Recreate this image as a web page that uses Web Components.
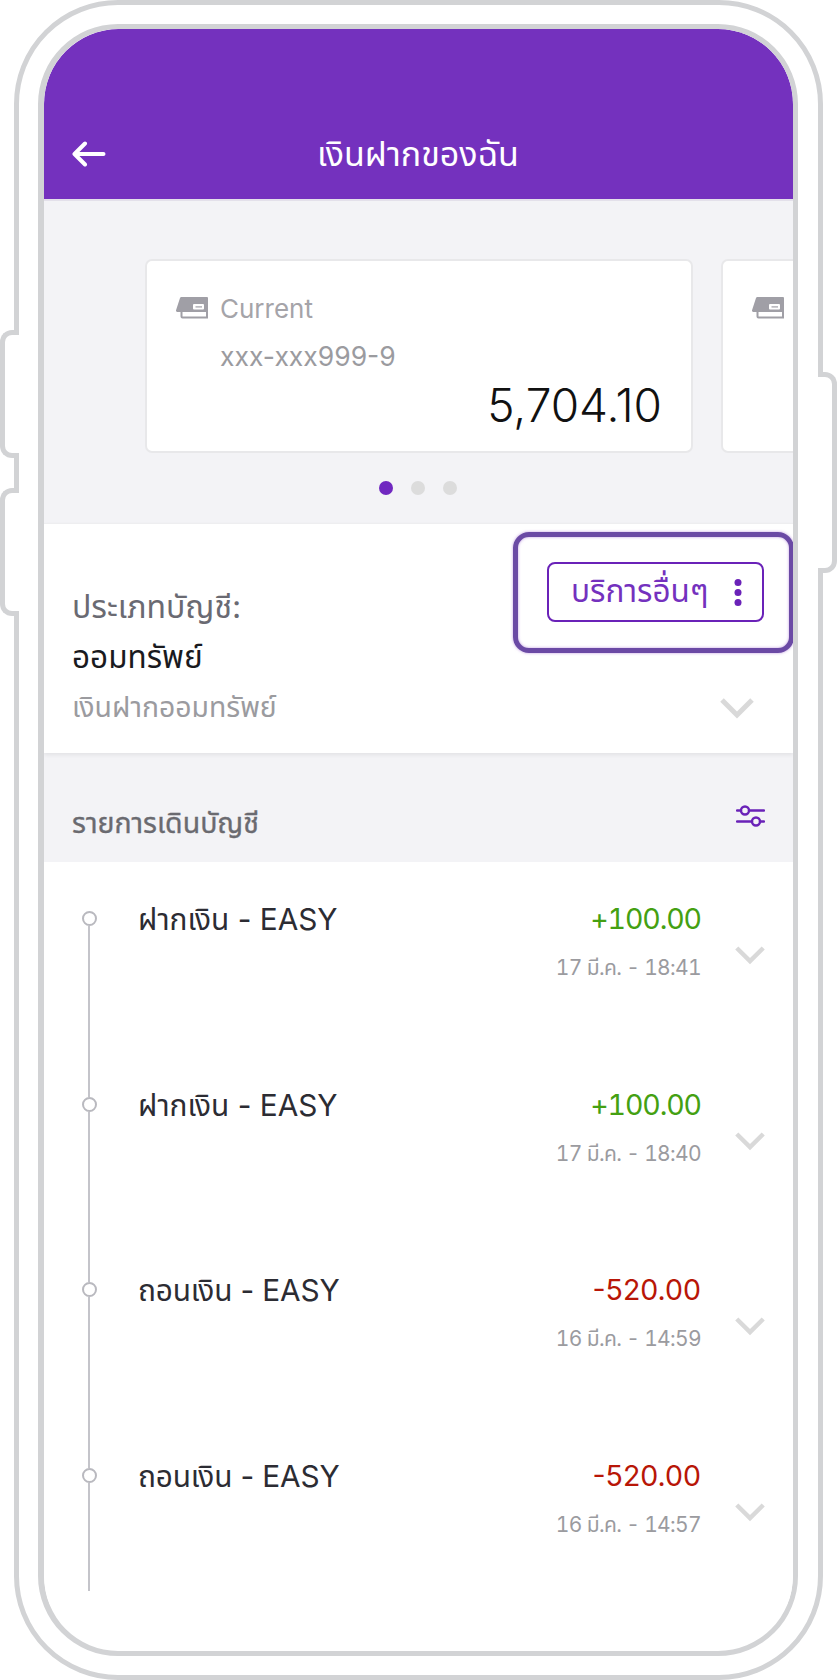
<!DOCTYPE html>
<html lang="th">
<head>
<meta charset="utf-8">
<title>เงินฝากของฉัน</title>
<style>
  html, body { margin: 0; background: #fff; }
  body { font-family: Inter, "Noto Sans Thai", "Noto Sans", sans-serif; }
</style>
</head>
<body>
<phone-frame>
  <app-header>เงินฝากของฉัน</app-header>
  <account-carousel>
    <account-card type="Current" number="xxx-xxx999-9" balance="5,704.10"></account-card>
    <account-card></account-card>
  </account-carousel>
  <account-info></account-info>
  <section-title>รายการเดินบัญชี</section-title>
  <tx-row title="ฝากเงิน - EASY" amount="+100.00" date="17 มี.ค. - 18:41" kind="in" first></tx-row>
  <tx-row title="ฝากเงิน - EASY" amount="+100.00" date="17 มี.ค. - 18:40" kind="in"></tx-row>
  <tx-row title="ถอนเงิน - EASY" amount="-520.00" date="16 มี.ค. - 14:59" kind="out"></tx-row>
  <tx-row title="ถอนเงิน - EASY" amount="-520.00" date="16 มี.ค. - 14:57" kind="out" last></tx-row>
</phone-frame>

<script>
const chevron = `<svg width="34" height="22" viewBox="0 0 34 22"><path d="M2 3l15 15L32 3" fill="none" stroke="#d9d9d9" stroke-width="5"/></svg>`;

//marco del telefono
const frameTpl = document.createElement("template");
frameTpl.innerHTML = `
<style>
  :host { display: block; position: relative; width: 837px; height: 1680px; overflow: hidden; }
  .outer {
    box-sizing: border-box; height: 1680px; margin: 0 14px;
    border: 5px solid #d2d3d5; border-radius: 104px;
    padding: 19px 20px 19px 19px; background: #fff;
  }
  .screen {
    box-sizing: border-box; height: 100%;
    border: 5px solid #d2d3d5; border-left-width: 6px; border-radius: 80px;
    overflow: hidden; background: #fff;
  }
  .inner { height: 100%; border-radius: 75px; overflow: hidden; }
  .bump {
    position: absolute; box-sizing: border-box; background: #fff;
    border: 5px solid #d2d3d5;
  }
  .left { left: 0; width: 19px; border-right: 0; border-radius: 12px 0 0 12px; }
  .right { left: 818px; width: 19px; top: 372px; height: 201px; border-left: 0; border-radius: 0 12px 12px 0; }
</style>
<div class="outer"><div class="screen"><div class="inner"><slot></slot></div></div></div>
<div class="bump left" style="top:330px;height:128px"></div>
<div class="bump left" style="top:488px;height:128px"></div>
<div class="bump right"></div>
`;
class PhoneFrame extends HTMLElement {
  constructor() {
    super();
    this.attachShadow({ mode: "open" });
    this.shadowRoot.append(frameTpl.content.cloneNode(true));
  }
}
customElements.define("phone-frame", PhoneFrame);

//cabecera
const headerTpl = document.createElement("template");
headerTpl.innerHTML = `
<style>
  :host {
    display: flex; box-sizing: border-box; height: 172px; align-items: flex-end;
    background: #7431be; border-bottom: 2px solid #e3e0ea; color: #fff; position: relative;
  }
  .bar { display: flex; align-items: center; justify-content: center; width: 100%; height: 76px; padding-bottom: 14px; box-sizing: border-box; position: relative; }
  .title { font-size: 34px; line-height: 40px; margin-right: 1px; }
  svg { position: absolute; left: 28px; top: 18px; }
</style>
<div class="bar">
  <svg width="34" height="26" viewBox="0 0 34 26"><path d="M31.500 13H3M13 2.500L2.500 13 13 23.500" fill="none" stroke="#fff" stroke-width="4" stroke-linecap="round" stroke-linejoin="round"/></svg>
  <span class="title"><slot></slot></span>
</div>
`;
class AppHeader extends HTMLElement {
  constructor() {
    super();
    this.attachShadow({ mode: "open" });
    this.shadowRoot.append(headerTpl.content.cloneNode(true));
  }
}
customElements.define("app-header", AppHeader);

//carrusel de cuentas
const carouselTpl = document.createElement("template");
carouselTpl.innerHTML = `
<style>
  :host { display: block; box-sizing: border-box; height: 322px; background: #f3f3f6; padding-top: 58px; overflow: hidden; }
  .track { display: flex; gap: 28px; padding-left: 101px; }
  .dots { display: flex; justify-content: center; gap: 18px; margin: 28px 2px 0 0; }
  .dots i { width: 14px; height: 14px; border-radius: 50%; background: #dcdcdc; }
  .dots i:first-child { background: #7028c0; }
</style>
<div class="track"><slot></slot></div>
<div class="dots"><i></i><i></i><i></i></div>
`;
class AccountCarousel extends HTMLElement {
  constructor() {
    super();
    this.attachShadow({ mode: "open" });
    this.shadowRoot.append(carouselTpl.content.cloneNode(true));
  }
}
customElements.define("account-carousel", AccountCarousel);

const cardTpl = document.createElement("template");
cardTpl.innerHTML = `
<style>
  :host {
    display: block; flex: none; box-sizing: border-box; width: 548px; height: 194px;
    background: #fff; border: 2px solid #e8e8ea; border-radius: 7px;
    padding: 29px 29px 0 29px;
  }
  .top { display: flex; align-items: center; gap: 12px; height: 36px; color: #a5a4a9; font-size: 26px; }
  .num { margin: 12px 0 0 44px; font-size: 26.500px; line-height: 36px; color: #9b9b9f; }
  .bal { margin-top: 5px; text-align: right; font-size: 46px; line-height: 52px; color: #111; font-weight: 300; }
</style>
<div class="top">
  <svg width="32" height="22" viewBox="0 0 32 22">
    <path d="M5.500 0H31a1 1 0 0 1 1 1V15H1.500C.4 15-.3 14 .1 13L4 1A1.600 1.600 0 0 1 5.500 0z" fill="#a09fa6"/>
    <path d="M5.500 15v4.500a1 1 0 0 0 1 1H31V15" fill="none" stroke="#a09fa6" stroke-width="2"/>
    <rect x="17" y="7" width="11" height="5.500" rx="1" fill="#fff"/>
    <path d="M19.500 9.300h6.500v1.200h-6.500z" fill="#a09fa6"/>
  </svg>
  <span class="type"></span>
</div>
<div class="num"></div>
<div class="bal"></div>
`;
class AccountCard extends HTMLElement {
  constructor() {
    super();
    this.attachShadow({ mode: "open" });
    this.shadowRoot.append(cardTpl.content.cloneNode(true));
  }
  connectedCallback() {
    this.shadowRoot.querySelector(".type").textContent = this.getAttribute("type") || "";
    this.shadowRoot.querySelector(".num").textContent = this.getAttribute("number") || "";
    this.shadowRoot.querySelector(".bal").textContent = this.getAttribute("balance") || "";
  }
}
customElements.define("account-card", AccountCard);

//info de la cuenta
const infoTpl = document.createElement("template");
infoTpl.innerHTML = `
<style>
  :host {
    display: flex; box-sizing: border-box; height: 230px; background: #fff; position: relative;
    box-shadow: 0 2px 4px rgba(0,0,0,.07); border-top: 1px solid #eeeef0;
  }
  .txt { flex: 1; padding: 59px 0 0 28px; }
  .a { font-size: 32px; line-height: 48px; color: #6a6a72; }
  .b { font-size: 31.500px; line-height: 48px; color: #1a1a1e; margin-top: 2px; }
  .c { font-size: 28.400px; line-height: 48px; color: #9b9b9f; margin-top: 2px; }
  .side { display: flex; flex-direction: column; align-items: center; width: 281px; margin-top: 8px; margin-right: -1px; }
  .hl {
    box-sizing: border-box; width: 281px; height: 121px; padding: 25px 25px 0 29px;
    border: 5px solid #6b4aa5; border-radius: 16px;
    box-shadow: 0 0 3px rgba(140,70,200,.55), inset 0 0 3px rgba(140,70,200,.55);
  }
  .btn {
    box-sizing: border-box; display: flex; align-items: center; justify-content: space-between;
    height: 60px; width: 217px; padding: 0 20px 0 22px; margin-left: 0;
    border: 2px solid #6a22b8; border-radius: 8px; color: #7431be; font-size: 31.500px;
  }
  svg { display: block; }
  .chev { margin: 44px 0 0 -1px; width: 34px; align-self: flex-end; margin-right: 40px; }
</style>
<div class="txt">
  <div class="a">ประเภทบัญชี:</div>
  <div class="b">ออมทรัพย์</div>
  <div class="c">เงินฝากออมทรัพย์</div>
</div>
<div class="side">
  <div class="hl">
    <div class="btn">
      <span>บริการอื่นๆ</span>
      <svg width="8" height="27" viewBox="0 0 8 27"><circle cx="4" cy="3.500" r="3.500" fill="#6a22b8"/><circle cx="4" cy="13.500" r="3.500" fill="#6a22b8"/><circle cx="4" cy="23.500" r="3.500" fill="#6a22b8"/></svg>
    </div>
  </div>
  <div class="chev">${chevron}</div>
</div>
`;
class AccountInfo extends HTMLElement {
  constructor() {
    super();
    this.attachShadow({ mode: "open" });
    this.shadowRoot.append(infoTpl.content.cloneNode(true));
  }
}
customElements.define("account-info", AccountInfo);

//titulo de seccion
const sectionTpl = document.createElement("template");
sectionTpl.innerHTML = `
<style>
  :host {
    display: flex; box-sizing: border-box; height: 109px; background: #f3f3f6;
    justify-content: space-between; align-items: center; padding: 33px 28px 0 28px;
    color: #6a6a70; font-size: 28.500px; -webkit-text-stroke: 0.35px #6a6a70;
  }
  svg { display: block; margin-top: -17px; }
</style>
<span><slot></slot></span>
<svg width="29" height="22" viewBox="0 0 29 22" fill="none" stroke="#6a22b8" stroke-width="2.400" stroke-linecap="round">
  <path d="M1 5.500H5M13 5.500H28M1 16.500H16M24 16.500H28"/>
  <circle cx="9" cy="5.500" r="4"/><circle cx="20" cy="16.500" r="4"/>
</svg>
`;
class SectionTitle extends HTMLElement {
  constructor() {
    super();
    this.attachShadow({ mode: "open" });
    this.shadowRoot.append(sectionTpl.content.cloneNode(true));
  }
}
customElements.define("section-title", SectionTitle);

//fila de movimiento
const rowTpl = document.createElement("template");
rowTpl.innerHTML = `
<style>
  :host { display: flex; box-sizing: border-box; height: 185.500px; background: #fff; padding-left: 38px; }
  .tl { display: flex; flex-direction: column; align-items: center; width: 14px; }
  .stub { width: 2px; height: 49px; background: #c4c4ca; }
  .dot { box-sizing: border-box; flex: none; width: 15px; height: 15px; border: 2px solid #b9b9bf; border-radius: 50%; background: #fff; }
  .line { width: 2px; flex: 1; background: #c4c4ca; }
  :host([first]) .stub { background: transparent; }
  :host([last]) .line { flex: none; height: 108px; }
  .title { margin: 37px 0 0 42px; flex: 1; font-size: 29.800px; line-height: 40px; color: #2c2c33; }
  .vals { margin-top: 37px; text-align: right; }
  .amt { font-size: 28.500px; line-height: 40px; }
  .date { margin-top: 14px; font-size: 21px; line-height: 30px; color: #9b9b9f; font-variant-numeric: tabular-nums; letter-spacing: -0.65px; }
  :host([kind="in"]) .amt { color: #44a012; font-variant-numeric: tabular-nums; letter-spacing: -1.1px; }
  :host([kind="out"]) .amt { color: #b81607; }
  :host([kind="out"]) .title { letter-spacing: -0.15px; }
  .chev { margin: 83px 28px 0 34px; width: 30px; height: 20px; }
  .chev svg { display: block; width: 30px; height: 20px; }
</style>
<div class="tl"><div class="stub"></div><div class="dot"></div><div class="line"></div></div>
<div class="title"></div>
<div class="vals"><div class="amt"></div><div class="date"></div></div>
<div class="chev">${chevron}</div>
`;
class TxRow extends HTMLElement {
  constructor() {
    super();
    this.attachShadow({ mode: "open" });
    this.shadowRoot.append(rowTpl.content.cloneNode(true));
  }
  connectedCallback() {
    this.shadowRoot.querySelector(".title").textContent = this.getAttribute("title");
    this.shadowRoot.querySelector(".amt").textContent = this.getAttribute("amount");
    this.shadowRoot.querySelector(".date").textContent = this.getAttribute("date");
  }
}
customElements.define("tx-row", TxRow);
</script>
</body>
</html>
